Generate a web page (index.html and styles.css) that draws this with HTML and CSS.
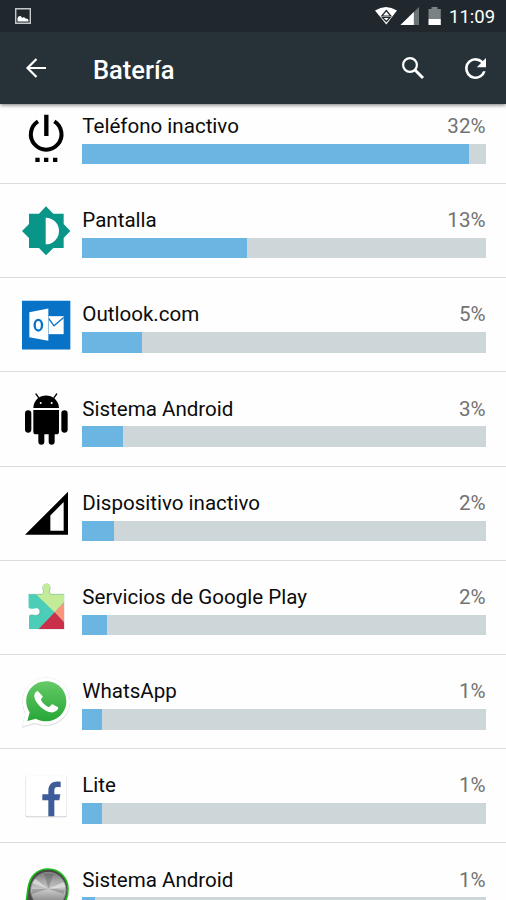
FILE: index.html
```html
<!DOCTYPE html>
<html lang="es">
<head>
<meta charset="utf-8">
<title>Batería</title>
<link rel="stylesheet" href="styles.css">
</head>
<body>
<header class="top">
  <div class="status">
    <svg class="shot" viewBox="0 0 16 16"><path d="M.7.7h14.6v14.6H.7z" fill="none" stroke="#c3c8ca" stroke-width="1.4"/><path d="M2.500 13.500V10q1-2.200 2.500-2t2 2q2-1.500 3.500.5 2.500-.3 3 1.500v1.500z" fill="#fff"/></svg>
    <svg class="signals" viewBox="0 0 68 20">
      <path d="M0 4.500Q11-2.500 22 4.500L11.300 18.500z" fill="#fff"/><path d="M11.300 4.500l4.500 5.500h-9zM7.500 11.500h7.500l-3.700 4z" fill="none" stroke="#20292e" stroke-width="1.200"/>
      <path d="M44 1v18H25.500z" fill="#6b7376"/><path d="M38.800 6v13H25.500z" fill="#fff"/>
      <path d="M53.500 3h3V1h6v2h3.300v10H53.500z" fill="#7b8285"/><path d="M53.500 13h12.300v6H53.500z" fill="#fff"/>
    </svg>
    <span class="clock">11:09</span>
  </div>
  <div class="bar">
    <svg class="back" viewBox="0 0 20 20"><path d="M20 10H1.500M10.500 1L1.500 10l9 9" fill="none" stroke="#fff" stroke-width="2.200"/></svg>
    <h1>Batería</h1>
    <svg class="search" viewBox="0 0 24 24"><circle cx="9" cy="9" r="6.900" fill="none" stroke="#fff" stroke-width="2.200"/><path d="M14 14l8 8" stroke="#fff" stroke-width="3"/></svg>
    <svg class="reload" viewBox="4 4 16 16"><path fill="#fff" d="M17.650 6.350A7.958 7.958 0 0 0 12 4a8 8 0 1 0 7.730 10h-2.080A6 6 0 1 1 12 6c1.660 0 3.140.69 4.220 1.780L13 11h7V4z"/></svg>
  </div>
</header>
<main class="list">
  <section class="row">
    <svg class="icon" viewBox="66 24 144 144"><path d="M114 51A46 46 0 1 0 163 51" fill="none" stroke="#000" stroke-width="12" transform="translate(0 1)"/><path d="M132.500 32h13v64h-13zM106 161h13v13h-13zm26 0h13v13h-13zm27 0h13v13h-13z"/></svg>
    <div class="info"><div class="label"><span>Teléfono inactivo</span><span class="pct">32%</span></div><div class="track"><div class="fill" style="width:387px"></div></div></div>
  </section>
  <section class="row">
    <svg class="icon" viewBox="66 49 144 144"><path d="M138 47l22 22h31v31l20 21-20 21v30h-31l-22 22-21-22H87v-30l-21-21 21-21V69h30z" fill="#099688"/><path d="M137 81a40 40 0 0 1 0 80z" fill="#fff"/></svg>
    <div class="info"><div class="label"><span>Pantalla</span><span class="pct">13%</span></div><div class="track"><div class="fill" style="width:165px"></div></div></div>
  </section>
  <section class="row">
    <svg class="icon" viewBox="66 46.500 144 144"><path d="M66 46h145v146H66z" fill="#0873c6"/><path d="M146 92h45v54h-45z" fill="#fff"/><path d="M146 99l16 22 29-25" fill="none" stroke="#0873c6" stroke-width="4"/><path d="M88 80l57-11v97l-57-11z" fill="#fff"/><ellipse cx="115" cy="119" rx="11" ry="16" fill="none" stroke="#0873c6" stroke-width="7"/></svg>
    <div class="info"><div class="label"><span>Outlook.com</span><span class="pct">5%</span></div><div class="track"><div class="fill" style="width:60px"></div></div></div>
  </section>
  <section class="row">
    <svg class="icon" viewBox="66 44 144 144"><path d="M100 83c2-50 74-50 77 0z"/><path d="M116 52l-8-11M162 52l8-11" stroke="#000" stroke-width="4" stroke-linecap="round"/><circle cx="122" cy="68" r="3" fill="#fff"/><circle cx="155" cy="68" r="3" fill="#fff"/><path d="M100 89h77v65q0 8-8 8h-5v22a9 9 0 0 1-18 0v-22h-13v22a9 9 0 0 1-18 0v-22h-7q-8 0-8-8z"/><rect x="75" y="90" width="19" height="67" rx="9.500"/><rect x="184" y="90" width="19" height="67" rx="9.500"/></svg>
    <div class="info"><div class="label"><span>Sistema Android</span><span class="pct">3%</span></div><div class="track"><div class="fill" style="width:41px"></div></div></div>
  </section>
  <section class="row">
    <svg class="icon" viewBox="66 41.700 144 144"><path d="M204 50v129H75zM191 81l-40 40v46h40z" fill-rule="evenodd"/></svg>
    <div class="info"><div class="label"><span>Dispositivo inactivo</span><span class="pct">2%</span></div><div class="track"><div class="fill" style="width:32px"></div></div></div>
  </section>
  <section class="row">
    <svg class="icon" viewBox="66 39.300 144 144">
      <clipPath id="piece"><path d="M85 73h40c8-3 6-10 3-17-4-20 26-20 23-2-3 8-6 16 3 19h39v105H87v-40c7-7 12-2 20-2 16 2 16-24 0-21-9 1-15 5-22-3z"/></clipPath>
      <g clip-path="url(#piece)"><path d="M80 35h115v145H80z" fill="#4bcdb8"/><path d="M108 73h17V33h70v60l-31 34z" fill="#c4eb98"/><path d="M195 94v67l-31-34z" fill="#fb9678"/><path d="M164 127l31 33v20h-82z" fill="#cb304b"/></g>
      <path d="M85 73h40c8-3 6-10 3-17M151 54c-3 8-6 16 3 19h39M87 138c7-7 12-2 20-2 14 1 16-10 11-16" fill="none" stroke="#617f70" stroke-opacity=".5" stroke-width="1.500"/>
    </svg>
    <div class="info"><div class="label"><span>Servicios de Google Play</span><span class="pct">2%</span></div><div class="track"><div class="fill" style="width:24.500px"></div></div></div>
  </section>
  <section class="row">
    <svg class="icon" viewBox="66 37 144 144">
      <defs><linearGradient id="wa" x2="0" y2="1"><stop stop-color="#65ca66"/><stop offset="1" stop-color="#27a637"/></linearGradient></defs>
      <path class="bubble" d="M66 183l10-39C51 85 89 36 139 36c40 0 71 31 71 71 0 51-54 87-104 65z" fill="#fff"/>
      <path d="M82 166l7-26C62 96 92 47 139 47c34 0 60 27 60 60 0 46-50 75-91 52z" fill="url(#wa)"/>
      <path d="M114 77c-5-2-12 6-11 16 2 20 30 44 49 47 13 2 25-8 22-15l-16-9c-5-1-7 8-11 8-9-2-22-15-24-22 0-4 6-6 5-10z" fill="#fff"/>
    </svg>
    <div class="info"><div class="label"><span>WhatsApp</span><span class="pct">1%</span></div><div class="track"><div class="fill" style="width:20px"></div></div></div>
  </section>
  <section class="row">
    <svg class="icon" viewBox="66 34.500 144 144"><rect x="77" y="47" width="124" height="123" rx="5" fill="#ccc"/><rect x="78" y="46" width="122" height="121" rx="5" fill="#fff" stroke="#eee"/><path d="M145 167v-48h-18v-18h18V91c0-22 15-31 37-27v16c-15-2-19 0-19 11v10h18l-3 18h-15v48z" fill="#3e5c9a"/></svg>
    <div class="info"><div class="label"><span>Lite</span><span class="pct">1%</span></div><div class="track"><div class="fill" style="width:20px"></div></div></div>
  </section>
  <section class="row">
    <svg class="icon" viewBox="66 317 144 144">
      <defs><linearGradient id="knob" x2="0" y2="1"><stop stop-color="#777"/><stop offset=".25" stop-color="#aaa"/><stop offset=".5" stop-color="#c8c8c8"/><stop offset=".75" stop-color="#999"/><stop offset="1" stop-color="#777"/></linearGradient></defs>
      <path d="M78 430l6-45c5-36 26-59 60-59 36 0 60 28 60 60 0 24-8 50-36 58z" fill="#4a4a4a" stroke="#19bd16" stroke-width="5"/>
      <circle cx="145" cy="389" r="53" fill="url(#knob)" stroke="#888" stroke-width="3"/><path d="M145 385l-40-30-8 14zM145 385l47-20 5 16z" fill="#eee" fill-opacity=".6"/><path d="M145 385l-50 2 1 14zM145 385l46 16 4-13z" fill="#666" fill-opacity=".4"/><path d="M145 385l-12-44h27z" fill="#555" fill-opacity=".35"/>
    </svg>
    <div class="info"><div class="label"><span>Sistema Android</span><span class="pct">1%</span></div><div class="track"><div class="fill" style="width:12.500px"></div></div></div>
  </section>
</main>
</body>
</html>
```
FILE: styles.css
```css
* { box-sizing: border-box; }
html, body { height: 100%; }
body {
  margin: 0;
  overflow: hidden;
  background: #fefefe;
  font-family: Roboto, "Liberation Sans", sans-serif;
  color: #0b0b0b;
}
svg { display: block; flex: none; overflow: visible; }
.top {
  position: relative;
  z-index: 1;
  height: 104px;
  background: #273238;
  box-shadow: 0 1px 4px rgba(0, 0, 0, .55);
}
.status {
  display: flex;
  align-items: center;
  height: 32px;
  padding: 0 10px 0 15px;
  background: #20282d;
}
.shot { width: 16px; height: 16px; }
.signals { width: 68px; height: 20px; margin-left: auto; }
.clock {
  width: 46px;
  margin-left: 6px;
  margin-right: 1px;
  padding-top: 2px;
  color: #fff;
  font-size: 18.5px;
  white-space: nowrap;
}
.bar {
  display: flex;
  align-items: center;
  height: 72px;
  padding: 0 20px 0 26px;
}
.back { width: 20px; height: 20px; }
h1 {
  margin: 4px 0 0 47px;
  color: #fff;
  font-size: 25.500px;
  font-weight: 500;
  line-height: 30px;
}
.search { width: 24px; height: 24px; margin-left: auto; }
.reload { width: 21px; height: 21px; margin-left: 40px; }
.list { margin-top: -14.300px; }
.row {
  display: flex;
  height: 94.220px;
  padding: 0 20.500px 0 22px;
  border-bottom: 1.500px solid #dcdddd;
}
.icon { width: 48px; height: 48px; margin-top: 22.600px; }
.bubble { filter: drop-shadow(0 1px 2px rgba(0, 0, 0, .35)); }
.info { flex: 1; margin-left: 12.300px; padding-top: 23.200px; }
.label {
  display: flex;
  justify-content: space-between;
  height: 30.800px;
  font-size: 20.550px;
  line-height: 26px;
  white-space: nowrap;
}
.pct { color: #727272; }
.track { height: 20.500px; background: #cdd6d8; }
.fill { height: 100%; background: #6bb5e2; }
```
